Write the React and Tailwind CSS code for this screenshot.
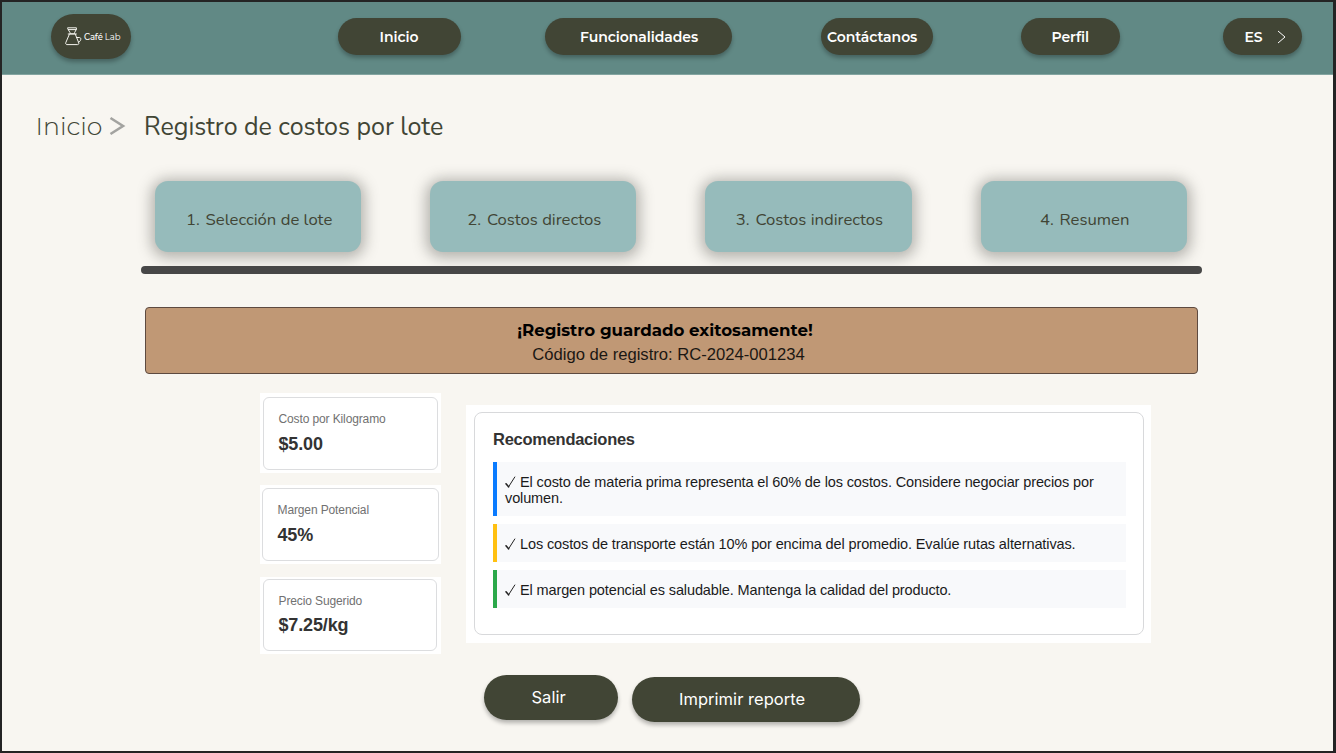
import React from "react";

const PILL =
  "flex items-center rounded-full bg-[#414535] text-white shadow-[0_3px_4px_rgba(0,0,0,0.28)]";

function NavPill({ className, children }) {
  return (
    <button
      className={`${PILL} h-[37px] shrink-0 whitespace-nowrap pt-[2px] font-['Montserrat','Inter',sans-serif] text-[14px] font-semibold tracking-[-0.05px] ${className}`}
    >
      {children}
    </button>
  );
}

function CarafeIcon() {
  return (
    <svg
      className="h-[19px] w-[17px] shrink-0"
      viewBox="0 0 17 19"
      fill="none"
      stroke="#f4f4ee"
      strokeWidth="1"
      strokeLinejoin="round"
      strokeLinecap="round"
    >
      <path d="M3 .8h8.4v1.4L9.6 5.6v1.2H5V5.6L3 2.2z" />
      <path d="M3.4 2.6h7.8M3.200 7h8.200" />
      <path d="M4.400 7.200L.8 15.600c-.4 1.200.2 2 1.200 2h10.600c1 0 1.500-.8 1.100-1.900L10.300 7.200" />
      <path d="M11.600 10.500h2.700c1.200.1 1.700.8 1.500 1.800-.2 1.500-1 2.500-2.500 3" />
    </svg>
  );
}

function Header() {
  return (
    <header className="flex h-[73px] items-center border-b border-[#84a5a1] bg-[#618985] pb-[3px] pl-[49px]">
      <div className={`${PILL} h-[45px] w-20 shrink-0 pl-[14px]`}>
        <CarafeIcon />
        <span className="ml-[2px] whitespace-nowrap pt-[2px] font-['Montserrat','Inter',sans-serif] text-[8.500px] leading-none tracking-[-0.12px]">
          <span className="font-medium">Café</span> Lab
        </span>
      </div>
      <NavPill className="ml-[207px] w-[123px] pl-[41.500px]">Inicio</NavPill>
      <NavPill className="ml-[84px] w-[187px] pl-[35px]">Funcionalidades</NavPill>
      <NavPill className="ml-[89px] w-[112px] pl-[6px]">Contáctanos</NavPill>
      <NavPill className="ml-[88px] w-[99px] pl-[30.500px]">Perfil</NavPill>
      <NavPill className="ml-[103px] w-[79px] pl-[21.500px]">
        ES
        <svg className="-mt-px ml-[14px] h-[14px] w-[9px]" viewBox="0 0 9 14" fill="none" stroke="#fff" strokeWidth="1">
          <path d="M1 1l7 6-7 6" />
        </svg>
      </NavPill>
    </header>
  );
}

function Breadcrumb() {
  return (
    <nav className="mt-[33px] flex h-9 items-center whitespace-nowrap pl-[34px] font-['Nunito','Open_Sans',sans-serif] text-[#414535]">
      <span className="-ml-[0.500px] w-[68.500px] pt-px font-['Montserrat','Nunito',sans-serif] text-[25.200px] font-light">Inicio</span>
      <svg className="ml-[5px] h-[20px] w-[17px]" viewBox="0 0 17 20" fill="none" stroke="#a3a3a0" strokeWidth="2.600">
        <path d="M1.500 2l12.500 8-12.500 8" />
      </svg>
      <span className="ml-[18px] pt-[3px] text-[25px]">Registro de costos por lote</span>
    </nav>
  );
}

const STEPS = ["Selección de lote", "Costos directos", "Costos indirectos", "Resumen"];

function Steps() {
  return (
    <section className="mt-[37px] pl-[139px]">
      <div className="flex gap-[69px] pl-[14px]">
        {STEPS.map((step, index) => (
          <div
            key={step}
            className="flex h-[71px] w-[206.200px] shrink-0 items-center justify-center rounded-[13px] bg-[#96bbbb] pl-[2px] pt-[6px] font-['Nunito','Open_Sans',sans-serif] text-[16.700px] text-[#414535] shadow-[0_2px_14px_4px_rgba(60,60,55,0.36)]"
          >
            <p className="whitespace-nowrap">
              <span className="mr-[1.500px]">{index + 1}.</span> {step}
            </p>
          </div>
        ))}
      </div>
      <div className="relative mt-[14px] h-[8px] w-[1061px] rounded-full bg-[#474747]" />
    </section>
  );
}

function Metric({ label, value, outer, inner, gap }) {
  return (
    <div className={`w-[181px] bg-white ${outer}`}>
      <div className={`rounded-[6px] border border-[#dcdddf] pl-[14.500px] ${inner}`}>
        <div className="text-[12px] leading-[14px] tracking-[-0.120px] text-[#717171]">{label}</div>
        <div className={`text-[18px] font-bold leading-[20px] tracking-[-0.150px] text-[#333] ${gap}`}>{value}</div>
      </div>
    </div>
  );
}

function Recommendation({ className, children }) {
  return (
    <li className={`flex items-center border-l-4 bg-[#f8f9fb] pl-[8px] pt-[2px] ${className}`}>
      <p className="w-[610px] text-[14.500px] leading-[16px] tracking-[-0.120px] text-[#1b1b1b]">
        <svg className="mr-1 inline-block h-[12px] w-[11px] align-[-1px]" viewBox="0 0 11 12" fill="none" stroke="#222" strokeLinecap="round">
          <path d="M1 7.800l2.600 3" strokeWidth="1.600" />
          <path d="M3.600 10.800L9.800 1" strokeWidth="1" />
        </svg>
        {children}
      </p>
    </li>
  );
}

export default function App() {
  return (
    <div className="h-[753px] w-[1336px] overflow-hidden border-b-2 border-l-2 border-r-[3px] border-t-2 border-[#242424] bg-[#f8f6f1] font-['Liberation_Sans',Arial,sans-serif]">
      <Header />
      <Breadcrumb />
      <Steps />

      <div className="ml-[143px] mt-[33px] flex h-[67px] w-[1053px] flex-col items-center rounded-[4px] border border-[#5d4a40] bg-[#c09875] pr-[13px] pt-[10px] text-black">
        <strong className="whitespace-nowrap font-['Montserrat','Inter',sans-serif] text-[16.620px] font-bold leading-6">
          ¡Registro guardado exitosamente!
        </strong>
        <span className="mt-px pl-[7px] text-[16.620px] leading-6 text-[#1b1713]">Código de registro: RC-2024-001234</span>
      </div>

      <main className="mt-[19px] flex h-[261px] items-start pl-[258px]">
        <div className="flex flex-col">
          <Metric label="Costo por Kilogramo" value="$5.00" gap="mt-[8px]" outer="h-[80px] pl-[3px] pt-[4px]" inner="h-[73px] w-[175px] pt-[14px]" />
          <Metric label="Margen Potencial" value="45%" gap="mt-[8px]" outer="mt-[12px] h-[79px] pl-[2px] pt-[3px]" inner="h-[73px] w-[177px] pt-[14px]" />
          <Metric label="Precio Sugerido" value="$7.25/kg" gap="mt-[7px]" outer="mt-[13px] h-[77px] pl-[3px] pt-[2px]" inner="h-[72px] w-[174px] pt-[14px]" />
        </div>
        <section className="ml-[25px] mt-[12px] h-[238px] w-[685px] bg-white pl-[8px] pt-[7px]">
          <div className="h-[223px] w-[670px] rounded-[8px] border border-[#d8d9db] pl-[18px] pt-[16px]">
            <h2 className="text-[16.500px] font-bold leading-5 tracking-[-0.270px] text-[#333]">Recomendaciones</h2>
            <ul className="mt-[13px] flex w-[633px] flex-col">
              <Recommendation className="h-[54px] border-[#0a7bff]">
                El costo de materia prima representa el 60% de los costos. Considere negociar precios por volumen.
              </Recommendation>
              <Recommendation className="mt-[8px] h-[38px] border-[#ffc011]">
                Los costos de transporte están 10% por encima del promedio. Evalúe rutas alternativas.
              </Recommendation>
              <Recommendation className="mt-[8px] h-[38px] border-[#2ba84a]">
                El margen potencial es saludable. Mantenga la calidad del producto.
              </Recommendation>
            </ul>
          </div>
        </section>
      </main>

      <footer className="mt-[21px] flex items-start gap-[14px] pl-[482px] font-['Inter',sans-serif] text-[16.490px] tracking-[0.040px]">
        <button className={`${PILL} h-[45px] w-[134px] pl-[47.500px]`}>Salir</button>
        <button className={`${PILL} mt-[2px] h-[45px] w-[228px] whitespace-nowrap pl-[47px]`}>Imprimir reporte</button>
      </footer>
    </div>
  );
}
